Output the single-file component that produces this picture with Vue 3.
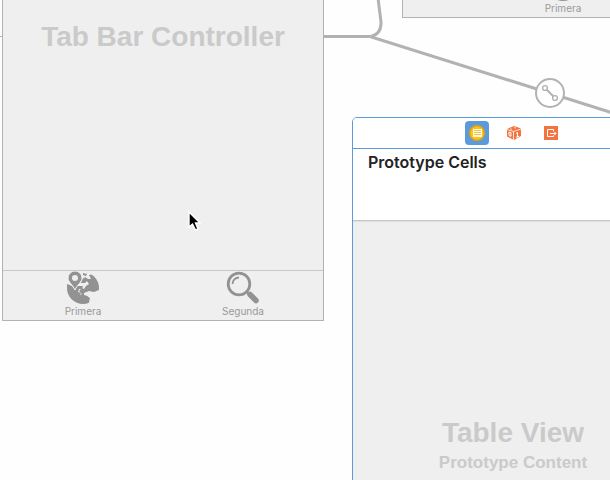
<template>
  <main class="canvas">
    <svg class="segues" width="640" height="120" viewBox="0 0 640 120" aria-hidden="true">
      <path d="M0 36.5H2" stroke-width="1" />
      <path d="M324 36.5H370L640 121.5" />
      <path d="M377.5 -6L381 22Q381.5 34 371 36.5" />
    </svg>

    <section class="scene tab-controller">
      <div class="scene-body">
        <h1 class="scene-title">Tab Bar Controller</h1>
      </div>
      <nav class="tab-bar">
        <button v-for="tab in tabs" :key="tab.label" type="button" class="tab">
          <svg v-if="tab.icon === 'globe'" class="tab-icon" viewBox="0 0 34 34">
            <circle cx="17" cy="17" r="16" fill="#929292" />
            <path d="M1 0H17L27 3L23 4L25 8L22 8L19 6L15 12L19 12L21 10L23 13L20 15L18 18L16 17L13 20L16 23L14 24L9 21L7 17L1 13Z" fill="#efefef" />
            <path d="M17 2L21 3L20 5L17 4ZM17 7L19 8L18 11L15 12ZM1 13L6 15L9 19L11 15L17 15L16 18L13 18L12 21L15 22L14 24L8 23L2 19Z" fill="#929292" />
            <path d="M18 22L23 20L28 21L33 19V25L29 30L22 33L25 28L22 25L18 24Z" fill="#efefef" />
            <path d="M20 22L24 21L28 25L26 29L23 31L24 27L20 24Z" fill="#efefef" />
            <path d="M9 0A7 7 0 0 0 2 7C2 11 7 14 9 19C11 14 16 11 16 7A7 7 0 0 0 9 0Z" fill="#929292" stroke="#efefef" />
            <circle cx="9" cy="7" r="3" fill="#efefef" />
          </svg>
          <svg v-else class="tab-icon" viewBox="0 0 34 34" fill="none" stroke="#929292">
            <circle cx="13" cy="13" r="10.8" stroke-width="2.8" />
            <path d="M6.5 13A6.5 6.5 0 0 1 13 6.5" stroke-width="1.8" />
            <path d="M21 21L24 24" stroke-width="2" />
            <path d="M24 23.5L30 29.5" stroke-width="5.5" stroke-linecap="round" />
          </svg>
          <span>{{ tab.label }}</span>
        </button>
      </nav>
    </section>

    <section class="scene first-view">
      <div class="scene-body"></div>
      <nav class="tab-bar borderless">
        <button type="button" class="tab">
          <svg class="tab-icon" viewBox="0 0 34 34">
            <circle cx="17" cy="17" r="16" fill="#929292" />
          </svg>
          <span>Primera</span>
        </button>
      </nav>
    </section>

    <section class="scene table-scene">
      <header class="dock">
        <button
          v-for="item in dockItems"
          :key="item"
          type="button"
          class="dock-item"
          :class="{ selected: selected === item }"
          :aria-label="item"
          @click="selected = item"
        >
          <svg v-if="item === 'Table View Controller'" width="16" height="16" viewBox="0 0 16 16">
            <circle cx="8" cy="8" r="7.3" fill="#ffc40c" stroke="#e2a312" stroke-width="1.4" />
            <path d="M4 4H13V12H4Z" fill="#fffbe8" />
            <path d="M5 5.5H12M5 7.5H12M5 9.5H12" stroke="#efc352" />
          </svg>
          <svg v-else-if="item === 'First Responder'" width="16" height="16" viewBox="0 0 16 16">
            <path d="M1 4L8 1L15 3.5V11L8 15L1 11.5Z" fill="#f37440" />
            <path d="M1 4.5L7.5 6.5L15 4M7.5 6.5V15" fill="none" stroke="#fff" stroke-width=".8" />
            <path d="M4 3.8L6 4.4M8 2.5L10 3.2" stroke="#fff" stroke-width=".7" />
            <path d="M3 7V10.5L5 11.3V7.8Z" fill="none" stroke="#fff" />
            <path d="M10 8.5L11.5 7.5V12M10 12.3L13 11.3" fill="none" stroke="#fff" />
          </svg>
          <svg v-else width="16" height="16" viewBox="0 0 16 16">
            <path d="M1 1H15V15H1Z" fill="#f37440" />
            <path d="M10.5 6V4.500H4.500V11.500H10.500V10.500M7 8.5H13M11 6.5L13 8.5L11 10.5" fill="none" stroke="#fff" />
          </svg>
        </button>
      </header>
      <div class="prototype">
        <h2>Prototype Cells</h2>
      </div>
      <div class="table-body">
        <p class="scene-title">Table View</p>
        <p class="scene-subtitle">Prototype Content</p>
      </div>
    </section>

    <svg class="segue-badge" width="32" height="32" viewBox="0 0 32 32" aria-hidden="true">
      <circle cx="16" cy="16" r="14" fill="#fff" stroke-width="2" />
      <path d="M12.5 12.5L19.5 19.5" stroke-width="2" />
      <circle cx="11" cy="11" r="2.4" stroke-width="1.4" />
      <circle cx="21" cy="21" r="2.4" stroke-width="1.4" />
    </svg>

    <svg class="pointer" width="16" height="22" viewBox="0 0 16 22" aria-hidden="true">
      <path d="M2 2V17L5.5 14L8.5 20L11 19L8.5 13H13Z" fill="#000" stroke="#fff" stroke-width="1.4" />
    </svg>
  </main>
</template>

<script setup>
import { ref } from 'vue'

const tabs = [
  { label: 'Primera', icon: 'globe' },
  { label: 'Segunda', icon: 'search' },
]

const dockItems = ['Table View Controller', 'First Responder', 'Exit']
const selected = ref('Table View Controller')
</script>

<style>
body {
  margin: 0;
  background: #fefefe;
}
</style>

<style scoped>
.canvas {
  position: relative;
  min-height: 100vh;
  overflow: hidden;
  background: #fefefe;
  font-family: "Liberation Sans", Arial, sans-serif;
}

.segues {
  position: absolute;
  top: 0;
  left: 0;
  fill: none;
  stroke: #b2b2b2;
  stroke-width: 3;
  pointer-events: none;
}

/* storyboard scenes share the size of a 320x568 device */
.scene {
  position: absolute;
  display: flex;
  flex-direction: column;
  box-sizing: border-box;
  width: 322px;
  height: 569px;
  border: 1px solid #b2b2b2;
  background: #efefef;
}

.tab-controller {
  top: -248px;
  left: 2px;
}

.first-view {
  top: -551px;
  left: 402px;
}

.table-scene {
  top: 117px;
  left: 352px;
  width: 324px;
  height: 600px;
  border-color: #5b9bdb;
  border-radius: 5px 5px 0 0;
  overflow: hidden;
}

.scene-body {
  flex: 1;
  display: flex;
  align-items: center;
  justify-content: center;
  padding-top: 50px;
}

.scene-title {
  margin: 0;
  color: #cacaca;
  font-size: 28px;
  font-weight: bold;
  line-height: 32px;
}

.scene-subtitle {
  margin: 3px 0 0;
  color: #cacaca;
  font-size: 17px;
  font-weight: bold;
  line-height: 22px;
}

.tab-bar {
  display: flex;
  height: 49px;
  border-top: 1px solid #c8c8c8;
}

.tab-bar.borderless {
  border-top-color: #efefef;
}

button {
  padding: 0;
  border: 0;
  background: none;
  font: inherit;
}

.tab {
  flex: 1;
  display: flex;
  flex-direction: column;
  align-items: center;
  color: #999;
  font-family: Inter, sans-serif;
  font-size: 10px;
  line-height: 12px;
}

.tab-icon {
  width: 34px;
  height: 34px;
}

.dock {
  display: flex;
  align-items: center;
  justify-content: center;
  gap: 13px;
  height: 30px;
  border-bottom: 1px solid #5b9bdb;
  background: #fff;
}

.dock-item {
  display: flex;
  align-items: center;
  justify-content: center;
  width: 24px;
  height: 24px;
  border-radius: 4px;
}

.dock-item.selected {
  background: #5b9bdb;
}

.prototype {
  height: 71px;
  border-bottom: 1px solid #c4c4c4;
  background: #fff;
  box-shadow: 0 1px 1px #e2e2e2;
}

.prototype h2 {
  margin: 3px 15px 0;
  color: #222;
  font-family: Inter, sans-serif;
  font-size: 16px;
  font-weight: 600;
  line-height: 20px;
}

.table-body {
  flex: 1;
  padding: 196px 2px 0 0;
  text-align: center;
}

.segue-badge {
  position: absolute;
  top: 77px;
  left: 534px;
  fill: none;
  stroke: #b2b2b2;
}

.pointer {
  position: absolute;
  top: 210px;
  left: 187px;
  pointer-events: none;
}
</style>
